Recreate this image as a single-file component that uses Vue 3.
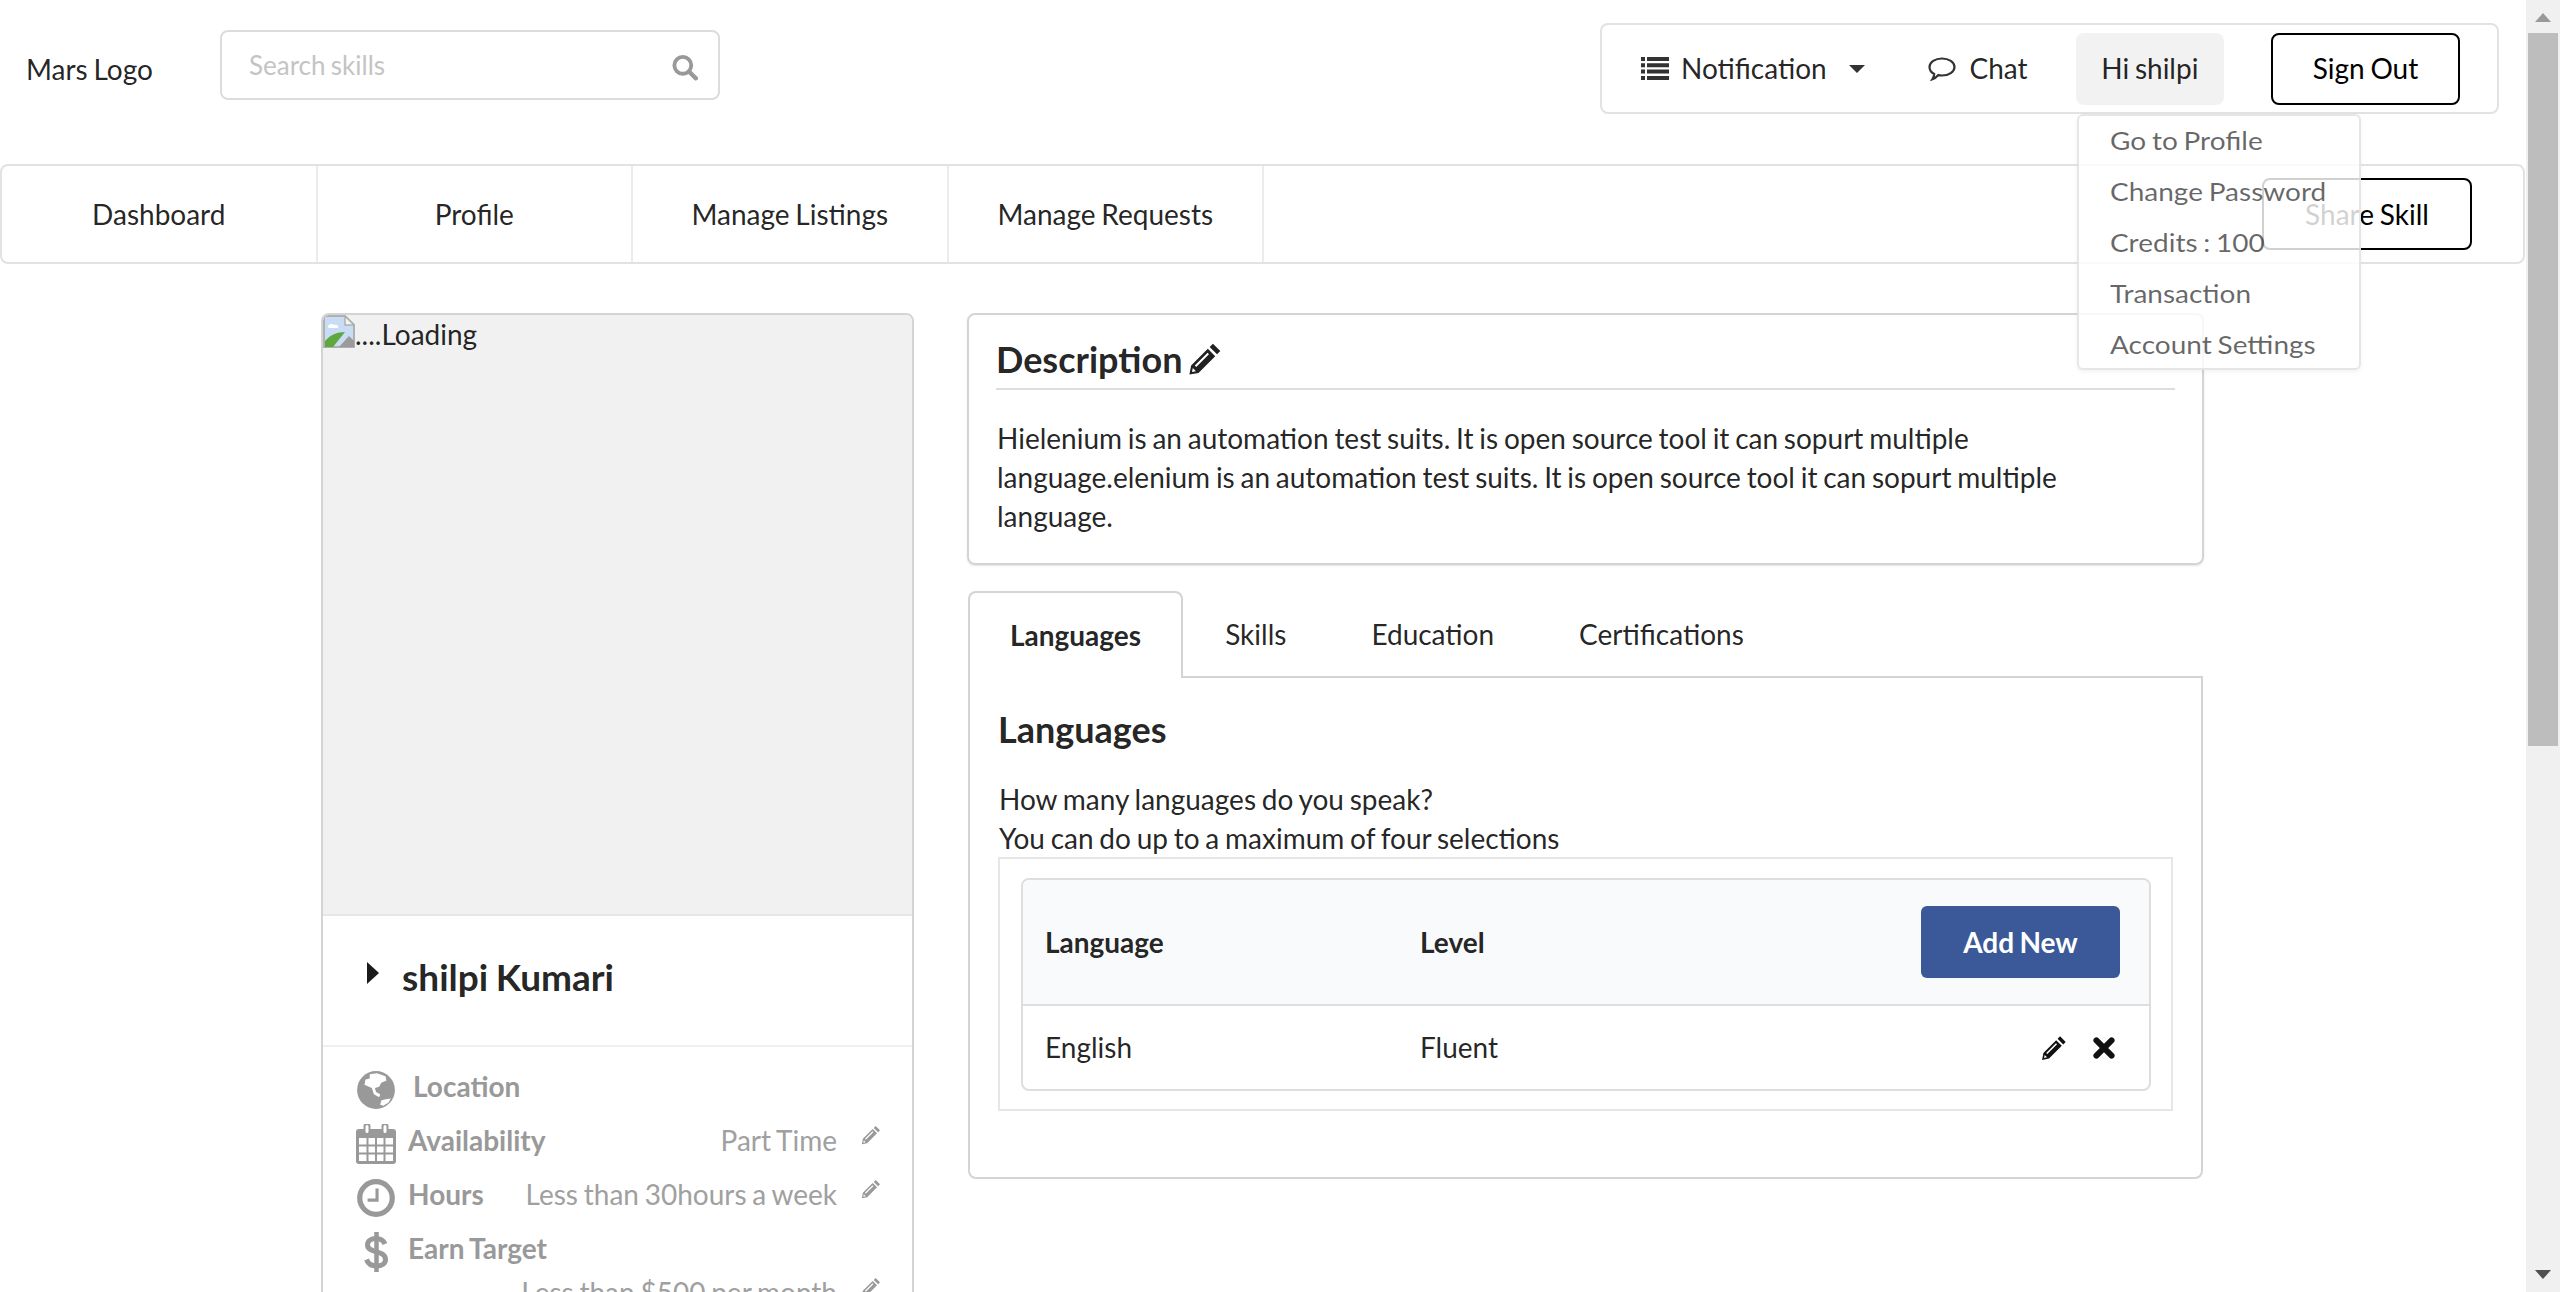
<script setup>
const menuItems = ['Dashboard', 'Profile', 'Manage Listings', 'Manage Requests']
const dropdownItems = ['Go to Profile', 'Change Password', 'Credits : 100', 'Transaction', 'Account Settings']
const tabs = ['Languages', 'Skills', 'Education', 'Certifications']
const pencil = 'M17.6 1.2l5.200 5.200-2.300 2.300-5.200-5.200zM14 4.800l5.200 5.200L7.400 21.800 1 23l1.200-6.400zM13.800 7.600L4.800 16.600l1 1 9-9zM3.400 18.400l-.6 2.800 2.800-.6z'
</script>

<template>
  <div class="page">
    <div class="content">
      <header class="top">
        <div class="logo">Mars Logo</div>
        <div class="search">
          <span class="search-text">Search skills</span>
          <svg class="search-icon" viewBox="0 0 24 24">
            <circle cx="10.500" cy="10.500" r="7.500" fill="none" stroke="currentColor" stroke-width="3.400" />
            <path d="M16 16l6 6" stroke="currentColor" stroke-width="4" stroke-linecap="round" />
          </svg>
        </div>
        <nav class="top-menu">
          <div class="top-item notification">
            <svg class="list-icon" viewBox="0 0 28 23">
              <path d="M0 0h4v4H0zM6 0h22v4H6zM0 6.300h4v4H0zM6 6.300h22v4H6zM0 12.600h4v4H0zM6 12.600h22v4H6zM0 19h4v4H0zM6 19h22v4H6z" fill="currentColor" />
            </svg>
            <span>Notification</span>
            <i class="caret-down"></i>
          </div>
          <div class="top-item chat">
            <svg class="chat-icon" viewBox="0 0 28 24">
              <path d="M14 1.500c6.800 0 12.500 3.700 12.500 8.500s-5.700 8.500-12.500 8.500c-1.300 0-2.500-.1-3.600-.4-1.500 1.700-3.600 3.400-6 4.200 1-1.500 1.700-3.400 1.800-5.300C3.500 15.600 1.500 13 1.500 10c0-4.800 5.700-8.500 12.500-8.500z" fill="none" stroke="currentColor" stroke-width="2.200" />
            </svg>
            <span>Chat</span>
          </div>
          <div class="top-item user">Hi shilpi</div>
          <button class="outline-btn sign-out">Sign Out</button>
        </nav>
      </header>

      <nav class="main-menu">
        <a v-for="item in menuItems" :key="item" class="main-item">{{ item }}</a>
        <button class="outline-btn share">Share Skill</button>
      </nav>

      <main class="columns">
        <aside class="profile-card">
          <div class="photo">
            <svg class="broken" viewBox="0 0 32 33">
              <path d="M1 1h21l9 9v22H1z" fill="#c9dcf6" stroke="#b0b0b0" stroke-width="2" />
              <path d="M22 1v9h9z" fill="#f4f4f4" stroke="#b0b0b0" stroke-width="1.500" />
              <path d="M5 12c0-3 4-4 6-2 3-1 5 1 4 3H6z" fill="#fff" />
              <path d="M2 32V26c5-6 12-9 20-9l-12 15z" fill="#5ea83e" />
              <path d="M16 32l10-11 5 5v6z" fill="#9a9a9a" />
            </svg>
            <span>....Loading</span>
          </div>
          <div class="name-row">
            <i class="caret-right"></i>
            <span>shilpi Kumari</span>
          </div>
          <div class="details">
            <div class="detail">
              <svg class="detail-icon" viewBox="0 0 40 38">
                <circle cx="20" cy="19" r="18" fill="currentColor" />
                <path d="M14 4l7-1 8 3 1 4-5 2-2 4-4 1 1 4 4 2-1 3-5-3-2-6-7-3 1-5 4-1zM28 28l6-1-2 4-5 3-3-1 1-4z" fill="#fff" />
              </svg>
              <span class="detail-label location">Location</span>
            </div>
            <div class="detail">
              <svg class="detail-icon" viewBox="0 0 40 40">
                <path d="M3 5h6V2h4v3h14V2h4v3h6a3 3 0 013 3v29a3 3 0 01-3 3H3a3 3 0 01-3-3V8a3 3 0 013-3z" fill="currentColor" />
                <path d="M3 14h34v23H3z" fill="#fff" />
                <path d="M11.500 14v23M20 14v23M28.500 14v23M3 21.500h34M3 29.500h34" stroke="currentColor" stroke-width="2" />
                <rect x="8.500" y="0" width="5" height="10" rx="2.500" fill="#fff" stroke="currentColor" stroke-width="2" />
                <rect x="26.500" y="0" width="5" height="10" rx="2.500" fill="#fff" stroke="currentColor" stroke-width="2" />
              </svg>
              <span class="detail-label">Availability</span>
              <span class="detail-value">Part Time</span>
              <svg class="detail-pencil" viewBox="0 0 24 24"><path :d="pencil" fill="currentColor" fill-rule="evenodd" /></svg>
            </div>
            <div class="detail">
              <svg class="detail-icon" viewBox="0 0 40 38">
                <circle cx="20" cy="19" r="15.500" fill="none" stroke="currentColor" stroke-width="5" />
                <path d="M21 10v11h-9" fill="none" stroke="currentColor" stroke-width="3" />
              </svg>
              <span class="detail-label">Hours</span>
              <span class="detail-value">Less than 30hours a week</span>
              <svg class="detail-pencil" viewBox="0 0 24 24"><path :d="pencil" fill="currentColor" fill-rule="evenodd" /></svg>
            </div>
            <div class="detail">
              <svg class="detail-icon dollar" viewBox="0 0 40 42">
                <path d="M29 13c-1.500-3.500-4.500-5.500-9-5.500-5 0-8.500 2.500-8.500 6.500 0 8.500 18 4.500 18 14.500 0 4-3.500 6.500-9 6.500-5 0-8.500-2.500-10-6.500" fill="none" stroke="currentColor" stroke-width="5" />
                <path d="M20.500 1v40" stroke="currentColor" stroke-width="4.500" />
              </svg>
              <span class="detail-label">Earn Target</span>
            </div>
            <div class="detail earn">
              <span class="detail-value">Less than $500 per month</span>
              <svg class="detail-pencil" viewBox="0 0 24 24"><path :d="pencil" fill="currentColor" fill-rule="evenodd" /></svg>
            </div>
          </div>
        </aside>

        <section class="right">
          <div class="description">
            <h3 class="desc-title">
              Description
              <svg class="title-pencil" viewBox="0 0 24 24"><path :d="pencil" fill="currentColor" fill-rule="evenodd" /></svg>
            </h3>
            <p class="desc-text">Hielenium is an automation test suits. It is open source tool it can sopurt multiple language.elenium is an automation test suits. It is open source tool it can sopurt multiple language.</p>
          </div>

          <div class="tabs">
            <a v-for="(tab, i) in tabs" :key="tab" class="tab" :class="{ active: i === 0 }">{{ tab }}</a>
          </div>
          <div class="panel">
            <h3 class="panel-title">Languages</h3>
            <p class="panel-text">How many languages do you speak?<br />You can do up to a maximum of four selections</p>
            <div class="table-wrap">
              <table class="lang-table">
                <thead>
                  <tr>
                    <th class="col-lang">Language</th>
                    <th class="col-level">Level</th>
                    <th class="col-action"><button class="add-btn">Add New</button></th>
                  </tr>
                </thead>
                <tbody>
                  <tr>
                    <td>English</td>
                    <td>Fluent</td>
                    <td class="row-actions">
                      <svg class="row-icon" viewBox="0 0 24 24"><path :d="pencil" fill="currentColor" fill-rule="evenodd" /></svg>
                      <svg class="row-icon" viewBox="0 0 24 24"><path d="M5 5l14 14M19 5L5 19" stroke="currentColor" stroke-width="5.500" stroke-linecap="round" /></svg>
                    </td>
                  </tr>
                </tbody>
              </table>
            </div>
          </div>
        </section>
      </main>

      <div class="dropdown">
        <div v-for="item in dropdownItems" :key="item" class="dropdown-item"><span>{{ item }}</span></div>
      </div>
    </div>

    <div class="scrollbar">
      <i class="arrow-up"></i>
      <div class="thumb"></div>
      <i class="arrow-down"></i>
    </div>
  </div>
</template>

<style>
html, body { margin: 0; height: 100%; overflow: hidden; background: #fff; }
</style>

<style scoped>
.page {
  display: flex;
  height: 1292px;
  overflow: hidden;
  font-family: Lato, "Liberation Sans", sans-serif;
  font-size: 28px;
  line-height: 39px;
  word-spacing: -1.4px;
  color: rgba(0, 0, 0, 0.87);
}

.content {
  position: relative;
  flex: 1;
  min-width: 0;
}

.top {
  display: flex;
  align-items: flex-start;
  height: 164px;
  box-sizing: border-box;
  padding: 23px 27px 0 26px;
}

.logo {
  width: 194px;
  padding-top: 27px;
}

.search {
  display: flex;
  align-items: center;
  justify-content: space-between;
  box-sizing: border-box;
  width: 500px;
  height: 70px;
  margin-top: 7px;
  padding: 0 20px 0 27px;
  border: 2px solid #dcdcdc;
  border-radius: 8px;
  color: #c4c4c4;
  font-size: 26px;
}

.search-text {
  margin-top: 0;
}

.search-icon {
  width: 27px;
  height: 28px;
  color: #999;
  margin-top: 4px;
}

.top-menu {
  display: flex;
  align-items: center;
  box-sizing: border-box;
  width: 899px;
  height: 91px;
  margin-left: auto;
  padding: 0 37px 0 0;
  border: 2px solid #e2e2e2;
  border-radius: 8px;
}

.top-item {
  display: flex;
  align-items: center;
  height: 72px;
}

.notification {
  width: 328px;
  padding-left: 39px;
  box-sizing: border-box;
}

.list-icon {
  width: 28px;
  height: 23px;
  margin-right: 12px;
  color: #333;
}

.caret-down {
  width: 0;
  height: 0;
  margin-left: 22px;
  border-left: 8px solid transparent;
  border-right: 8px solid transparent;
  border-top: 8px solid #333;
}

.chat {
  width: 148px;
}

.chat-icon {
  width: 28px;
  height: 24px;
  margin-right: 13px;
  color: #333;
}

.user {
  justify-content: center;
  width: 149px;
  background: #f2f2f2;
  border-radius: 8px;
}

.outline-btn {
  box-sizing: border-box;
  background: #fff;
  border: 2px solid #000;
  border-radius: 8px;
  font: inherit;
  word-spacing: inherit;
  color: #000;
}

.sign-out {
  width: 190px;
  height: 72px;
  margin-left: 47px;
}

.main-menu {
  display: flex;
  align-items: center;
  position: relative;
  box-sizing: border-box;
  width: 2525px;
  height: 100px;
  border: 2px solid #e2e2e2;
  border-radius: 8px;
}

.main-item {
  box-sizing: border-box;
  width: 315.500px;
  height: 100%;
  display: flex;
  align-items: center;
  justify-content: center;
  border-right: 2px solid #ececec;
}

.share {
  width: 210px;
  height: 72px;
  margin-left: auto;
  margin-right: 51px;
}

.columns {
  display: flex;
  align-items: flex-start;
  gap: 53px;
  padding: 49px 0 0 321px;
}

.profile-card {
  box-sizing: border-box;
  width: 593px;
  border: 2px solid #d4d4d5;
  border-radius: 8px;
  overflow: hidden;
}

.photo {
  display: flex;
  align-items: flex-start;
  height: 599px;
  background: #f1f1f1;
  border-bottom: 2px solid #e6e6e6;
}

.broken {
  width: 32px;
  height: 33px;
  flex: none;
}

.name-row {
  display: flex;
  align-items: center;
  height: 131px;
  padding: 0 0 9px 44px;
  border-bottom: 2px solid #f0f0f0;
  box-sizing: border-box;
  font-size: 37px;
  font-weight: 700;
}

.caret-right {
  width: 0;
  height: 0;
  margin-right: 23px;
  margin-top: -6px;
  border-top: 11px solid transparent;
  border-bottom: 11px solid transparent;
  border-left: 12px solid #1b1b1b;
}

.details {
  padding: 16px 31px 0 32px;
  color: #999;
}

.detail {
  display: flex;
  align-items: center;
  height: 54px;
}

.detail-icon {
  flex: none;
  width: 42px;
  height: 40px;
  margin-right: 11px;
}

.dollar {
  height: 42px;
}

.detail-label {
  font-weight: 700;
  margin-bottom: 8px;
}

.location {
  margin-left: 5px;
}

.detail-value {
  margin-left: auto;
  color: #a0a0a0;
  margin-bottom: 8px;
}

.detail-pencil {
  flex: none;
  width: 20px;
  height: 20px;
  margin: 0 0 18px 24px;
}

.earn {
  height: 30px;
  margin-top: 2px;
}

.right {
  width: 1237px;
}

.description {
  box-sizing: border-box;
  height: 252px;
  padding: 22px 28px 0 27px;
  border: 2px solid #d4d4d5;
  border-radius: 8px;
  box-shadow: 0 1px 2px rgba(34, 36, 38, 0.12);
}

.desc-title {
  display: flex;
  align-items: flex-start;
  gap: 6px;
  margin: 0;
  height: 51px;
  width: 1179px;
  border-bottom: 2px solid #ddd;
  font-size: 36px;
  font-weight: 700;
  line-height: 44px;
}

.title-pencil {
  width: 34px;
  height: 34px;
  margin-top: 5px;
}

.desc-text {
  margin: 29px 0 0 1px;
}

.tabs {
  display: flex;
  align-items: flex-end;
  height: 85px;
  margin: 26px 0 0 1px;
  position: relative;
  z-index: 1;
}

.tab {
  box-sizing: border-box;
  display: flex;
  align-items: center;
  height: 85px;
  padding: 2px 43px 0 42px;
}

.active {
  background: #fff;
  height: 87px;
  padding: 0 40px;
  margin-bottom: -2px;
  border: 2px solid #d4d4d5;
  border-bottom: none;
  border-radius: 8px 8px 0 0;
  font-weight: 700;
}

.panel {
  box-sizing: border-box;
  height: 503px;
  margin-left: 1px;
  width: 1235px;
  padding: 29px 28px 0;
  border: 2px solid #d4d4d5;
  border-radius: 0 0 8px 8px;
}

.panel-title {
  margin: 0;
  font-size: 36px;
  font-weight: 700;
  line-height: 44px;
}

.panel-text {
  margin: 29px 0 0 1px;
}

.table-wrap {
  box-sizing: border-box;
  height: 254px;
  margin-top: -1px;
  padding: 19px 20px 0 21px;
  border: 2px solid #e6e6e6;
}

.lang-table {
  box-sizing: border-box;
  width: 100%;
  border: 2px solid #dedede;
  border-radius: 8px;
  border-spacing: 0;
  table-layout: fixed;
}

.lang-table th {
  height: 124px;
  padding: 0 0 0 22px;
  background: #f9fafb;
  border-bottom: 2px solid #dedede;
  font-weight: 700;
  text-align: left;
}

.lang-table th:first-child {
  border-top-left-radius: 6px;
}

.lang-table th:last-child {
  border-top-right-radius: 6px;
}

.lang-table td {
  height: 83px;
  padding: 0 0 0 22px;
}

.col-lang {
  width: 353px;
}

.col-level {
  width: 353px;
}

.lang-table .col-action {
  padding: 0 29px 0 0;
  text-align: right;
}

.add-btn {
  width: 199px;
  height: 72px;
  border: none;
  border-radius: 6px;
  background: #3b5998;
  color: #fff;
  font: inherit;
  font-weight: 700;
  word-spacing: inherit;
}

.lang-table .row-actions {
  padding: 0 32px 0 0;
  text-align: right;
  line-height: 0;
}

.row-icon {
  width: 26px;
  height: 26px;
  margin-left: 24px;
  color: #111;
}

.dropdown {
  position: absolute;
  top: 114px;
  left: 2077px;
  box-sizing: border-box;
  width: 284px;
  height: 256px;
  padding: 0 0 0 31px;
  background: rgba(255, 255, 255, 0.82);
  border: 2px solid rgba(220, 220, 220, 0.7);
  border-radius: 6px;
  box-shadow: 0 2px 4px rgba(0, 0, 0, 0.05);
  color: rgba(0, 0, 0, 0.6);
  font-size: 28px;
}

.dropdown-item {
  height: 51px;
  line-height: 50px;
  white-space: nowrap;
}

.dropdown-item span {
  display: inline-block;
  transform: scaleY(0.86);
}

.scrollbar {
  position: relative;
  flex: none;
  width: 34px;
  height: 100%;
  background: #f0f0f0;
}

.thumb {
  position: absolute;
  top: 33px;
  left: 2px;
  width: 30px;
  height: 713px;
  background: #bdbdbd;
}

.arrow-up,
.arrow-down {
  position: absolute;
  left: 9px;
  width: 0;
  height: 0;
  border-left: 8px solid transparent;
  border-right: 8px solid transparent;
}

.arrow-up {
  top: 13px;
  border-bottom: 9px solid #999;
}

.arrow-down {
  bottom: 13px;
  border-top: 9px solid #505050;
}
</style>
